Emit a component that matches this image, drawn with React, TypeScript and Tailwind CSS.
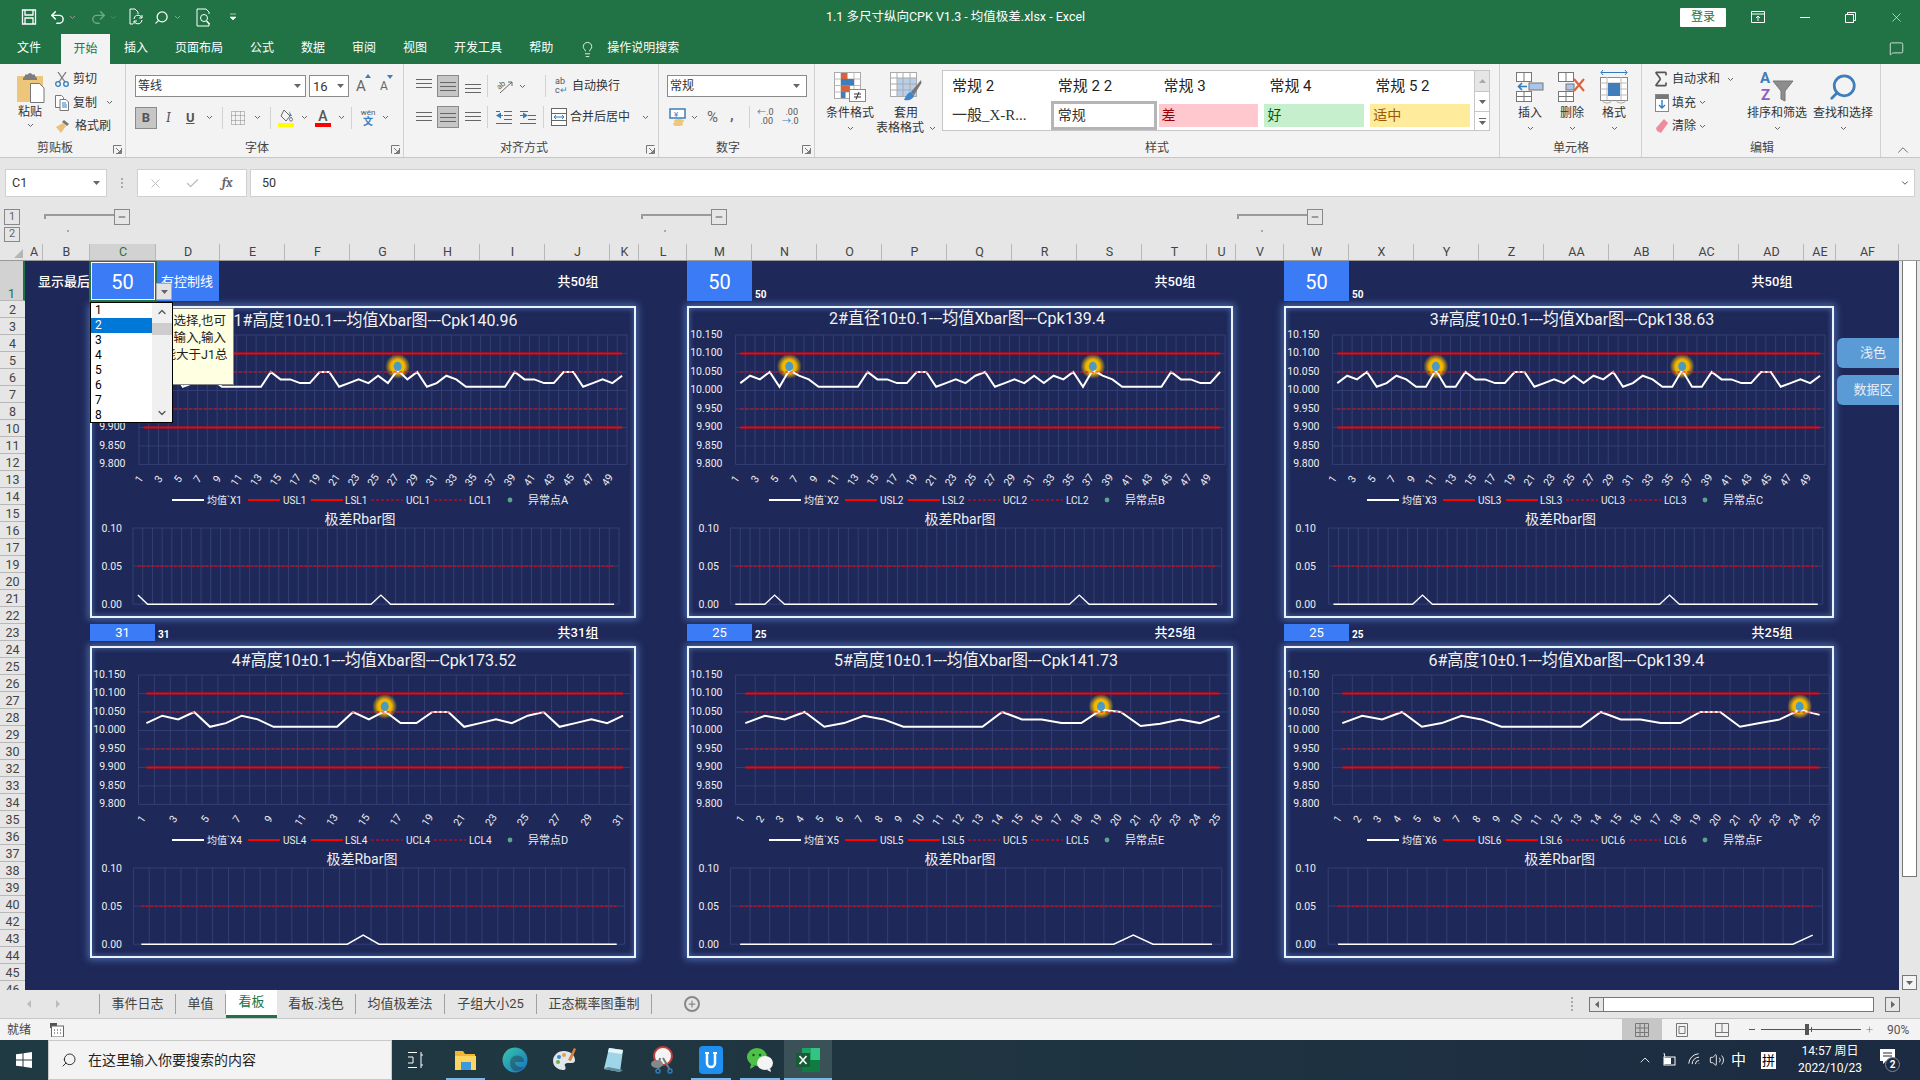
import React from 'react';
import { Undo2, Redo2, Search, Lightbulb, ChevronDown, ChevronUp, Plus, Minus, X, Check, MessageSquare, Sigma, Volume2, Wifi } from 'lucide-react';

// ---- chart data ----
const base = [10.02, 10.04, 10.03, 10.05, 10.01, 10.02, 10.04, 10.03, 10.01, 10.01, 10.01, 10.01, 10.01, 10.05, 10.03, 10.03, 10.02, 10.02, 10.05, 10.05, 10.01, 10.02, 10.03, 10.02, 10.04];
const d1 = [...base, 10.02, 10.055, 10.03, 10.05, 10.01, 10.02, 10.04, 10.03, 10.01, 10.01, 10.01, 10.01, 10.01, 10.05, 10.03, 10.03, 10.02, 10.02, 10.05, 10.05, 10.01, 10.02, 10.03, 10.02, 10.04];
const d2 = [10.02, 10.04, 10.03, 10.05, 10.01, 10.055, 10.04, 10.03, 10.01, 10.01, 10.01, 10.01, 10.01, 10.05, 10.03, 10.03, 10.02, 10.02, 10.05, 10.05, 10.01, 10.02, 10.03, 10.02, 10.04, 10.05, 10.01, 10.02, 10.03, 10.02, 10.04, 10.02, 10.04, 10.03, 10.05, 10.01, 10.055, 10.04, 10.03, 10.01, 10.01, 10.01, 10.01, 10.01, 10.05, 10.03, 10.03, 10.02, 10.02, 10.05];
const b3 = [10.02, 10.04, 10.03, 10.05, 10.01, 10.02, 10.04, 10.03, 10.01, 10.01, 10.055, 10.01, 10.01, 10.05, 10.03, 10.03, 10.02, 10.02, 10.05, 10.05, 10.01, 10.02, 10.03, 10.02, 10.04];
const d3 = [...b3, ...b3];
const d4 = [10.02, 10.04, 10.03, 10.05, 10.01, 10.02, 10.04, 10.03, 10.01, 10.01, 10.01, 10.01, 10.01, 10.05, 10.03, 10.052, 10.02, 10.02, 10.05, 10.05, 10.01, 10.02, 10.03, 10.02, 10.04, 10.05, 10.01, 10.02, 10.03, 10.02, 10.04];
const d5 = [10.02, 10.04, 10.03, 10.05, 10.01, 10.02, 10.04, 10.03, 10.01, 10.01, 10.01, 10.01, 10.01, 10.05, 10.03, 10.03, 10.02, 10.02, 10.056, 10.05, 10.012, 10.018, 10.03, 10.02, 10.04];
const d6 = [10.02, 10.04, 10.03, 10.05, 10.01, 10.02, 10.04, 10.03, 10.01, 10.01, 10.01, 10.01, 10.01, 10.05, 10.03, 10.03, 10.02, 10.02, 10.05, 10.05, 10.01, 10.02, 10.03, 10.056, 10.042];

interface ChartCfg {
  title: string; titleLen: number; titleX: number; titleY: number;
  w: number; plot: [number, number]; rplot: [number, number]; rTitleX: number; lx: number;
  data: number[]; marks: number[]; peaks: number[];
  no: number; pt: string;
  count: string; sub: string; total: string;
}

const charts: ChartCfg[] = [
  { title: '1#高度10±0.1---均值Xbar图---Cpk140.96', titleLen: 284, titleX: 285.6, titleY: 19, w: 546, plot: [49, 537], rplot: [43, 529], rTitleX: 270, lx: 0, data: d1, marks: [26], peaks: [0, 25], no: 1, pt: 'A', count: '50', sub: '', total: '共50组' },
  { title: '2#直径10±0.1---均值Xbar图---Cpk139.4', titleLen: 276, titleX: 280, titleY: 17, w: 546, plot: [48.4, 538], rplot: [43.4, 534.8], rTitleX: 273, lx: 0, data: d2, marks: [5, 36], peaks: [4, 35], no: 2, pt: 'B', count: '50', sub: '50', total: '共50组' },
  { title: '3#高度10±0.1---均值Xbar图---Cpk138.63', titleLen: 284.5, titleX: 288, titleY: 18, w: 550, plot: [48.4, 541], rplot: [44.6, 538.7], rTitleX: 276.5, lx: 1, data: d3, marks: [10, 35], peaks: [9, 34], no: 3, pt: 'C', count: '50', sub: '50', total: '共50组' },
  { title: '4#高度10±0.1---均值Xbar图---Cpk173.52', titleLen: 284.5, titleX: 284, titleY: 19, w: 546, plot: [48.5, 541], rplot: [43.4, 534.6], rTitleX: 272, lx: 0, data: d4, marks: [15], peaks: [14], no: 4, pt: 'D', count: '31', sub: '31', total: '共31组' },
  { title: '5#高度10±0.1---均值Xbar图---Cpk141.73', titleLen: 284, titleX: 289, titleY: 19, w: 546, plot: [48.4, 542.5], rplot: [43.4, 534.8], rTitleX: 273, lx: 0, data: d5, marks: [18], peaks: [20], no: 5, pt: 'E', count: '25', sub: '25', total: '共25组' },
  { title: '6#高度10±0.1---均值Xbar图---Cpk139.4', titleLen: 276, titleX: 282.4, titleY: 19, w: 550, plot: [48.4, 545.5], rplot: [44.2, 538.6], rTitleX: 275.7, lx: 1, data: d6, marks: [23], peaks: [24], no: 6, pt: 'F', count: '25', sub: '25', total: '共25组' },
];

const GRID = '#343f74';
const yLabels = ['10.150', '10.100', '10.050', '10.000', '9.950', '9.900', '9.850', '9.800'];

const Chart: React.FC<{ c: ChartCfg }> = ({ c }) => {
  const n = c.data.length;
  const top = 28, bottom = 157.4;
  const yOf = (v: number) => top + ((10.15 - v) / 0.35) * (bottom - top);
  const cw = (c.plot[1] - c.plot[0]) / n;
  const xOf = (i: number) => c.plot[0] + (i + 0.5) * cw;
  const rTop = 221, rBot = 297.2;
  const rw = (c.rplot[1] - c.rplot[0]) / n;
  const rxOf = (i: number) => c.rplot[0] + (i + 0.5) * rw;
  const rv = Array.from({ length: n }, (_, i) => (c.peaks.includes(i) ? 0.012 : 0));
  const ryOf = (v: number) => rBot - (v / 0.1) * (rBot - rTop);
  const pts = c.data.map((v, i) => `${xOf(i).toFixed(1)},${yOf(v).toFixed(1)}`).join(' ');
  const rpts = rv.map((v, i) => `${rxOf(i).toFixed(1)},${ryOf(v).toFixed(1)}`).join(' ');
  const step = n > 25 ? 2 : 1;
  const l = c.lx;
  const leg = 193;
  const lines: [number, string, string, boolean][] = [
    [82, `均值\`X${c.no}`, '#ffffff', false],
    [158, `USL${c.no}`, '#ff0000', false],
    [221, `LSL${c.no}`, '#ff0000', false],
    [281, `UCL${c.no}`, '#ff0000', true],
    [344, `LCL${c.no}`, '#ff0000', true],
  ];
  return (
    <div className="h-[312px] border-2 border-[#eaf1ff] shadow-[0_0_7px_2px_rgba(106,153,224,0.55),inset_0_0_5px_1px_rgba(106,153,224,0.45)]" style={{ width: c.w }}>
      <svg width={c.w - 4} height={308} className="block overflow-visible">
        <defs>
          <radialGradient id={`glow${c.no}`}>
            <stop offset="0%" stopColor="#ffc800" />
            <stop offset="55%" stopColor="#f0b400" />
            <stop offset="100%" stopColor="#f0b400" stopOpacity="0" />
          </radialGradient>
        </defs>
        <g transform="translate(-2,-1)">
          <text x={c.titleX} y={c.titleY} textAnchor="middle" textLength={c.titleLen} lengthAdjust="spacingAndGlyphs" className="fill-[#f2f2f2] text-[17px]">{c.title}</text>
          {yLabels.map((t, i) => {
            const y = top + (i * (bottom - top)) / 7;
            return (
              <g key={t}>
                <line x1={c.plot[0]} x2={c.plot[1]} y1={y} y2={y} stroke={GRID} />
                <text x={35.5} y={y + 3} textAnchor="end" className="fill-[#eeeeee] text-[10.5px]">{t}</text>
              </g>
            );
          })}
          {Array.from({ length: n + 1 }, (_, i) => (
            <line key={i} x1={c.plot[0] + i * cw} x2={c.plot[0] + i * cw} y1={top} y2={bottom} stroke={GRID} />
          ))}
          {Array.from({ length: n }, (_, i) => i)
            .filter((i) => i % step === 0)
            .map((i) => (
              <text key={i} transform={`translate(${xOf(i) - 2},${i + 1 < 10 ? 174 : 175}) rotate(-55)`} textAnchor="middle" className="fill-[#eeeeee] text-[10.5px]">{i + 1}</text>
            ))}
          {c.marks.map((i) => (
            <circle key={i} cx={xOf(i)} cy={yOf(10.065)} r={12.5} fill={`url(#glow${c.no})`} />
          ))}
          <polyline points={pts} fill="none" stroke="#ffffff" strokeWidth={2} />
          {c.marks.map((i) => (
            <ellipse key={i} cx={xOf(i)} cy={yOf(10.065)} rx={4} ry={4.6} fill="#4d9ac0" />
          ))}
          <line x1={xOf(0)} x2={xOf(n - 1)} y1={yOf(10.1)} y2={yOf(10.1)} stroke="#ff0000" strokeWidth={2} />
          <line x1={xOf(0)} x2={xOf(n - 1)} y1={yOf(9.9)} y2={yOf(9.9)} stroke="#ff0000" strokeWidth={2} />
          <line x1={xOf(0)} x2={xOf(n - 1)} y1={yOf(10.05)} y2={yOf(10.05)} stroke="#ff0000" strokeDasharray="3 2" />
          <line x1={xOf(0)} x2={xOf(n - 1)} y1={yOf(9.95)} y2={yOf(9.95)} stroke="#e01010" strokeDasharray="3 2" />

          {lines.map(([x, t, col, dash], i) => (
            <g key={t}>
              <line x1={x + l} x2={x + l + 32} y1={leg} y2={leg} stroke={col} strokeWidth={dash ? 1 : 2} strokeDasharray={dash ? '3 2' : undefined} />
              <text x={x + l + (i === 2 ? 34 : 35)} y={leg + 3.5} className="fill-[#eeeeee] text-[10px]">{t}</text>
            </g>
          ))}
          <circle cx={420 + l} cy={leg} r={2.4} fill="#5aa58c" />
          <text x={438 + l} y={leg + 3.5} className="fill-[#eeeeee] text-[11px]">{`异常点${c.pt}`}</text>

          <text x={c.rTitleX} y={217} textAnchor="middle" className="fill-[#eeeeee] text-[14px]">极差Rbar图</text>
          {['0.10', '0.05', '0.00'].map((t, i) => {
            const y = rTop + (i * (rBot - rTop)) / 2;
            return (
              <g key={t}>
                <line x1={c.rplot[0]} x2={c.rplot[1]} y1={y} y2={y} stroke={GRID} />
                <text x={32} y={y + 3.5} textAnchor="end" className="fill-[#eeeeee] text-[10.5px]">{t}</text>
              </g>
            );
          })}
          {Array.from({ length: n + 1 }, (_, i) => (
            <line key={i} x1={c.rplot[0] + i * rw} x2={c.rplot[0] + i * rw} y1={rTop} y2={rBot} stroke={GRID} />
          ))}
          <line x1={rxOf(0)} x2={rxOf(n - 1)} y1={ryOf(0.05)} y2={ryOf(0.05)} stroke="#ff0000" strokeDasharray="3 1.5" />
          <polyline points={rpts} fill="none" stroke="#ffffff" strokeWidth={1.4} />
        </g>
      </svg>
    </div>
  );
};

// ---- small ribbon helpers ----
const Chev: React.FC<{ className?: string }> = ({ className = '' }) => (
  <svg width="7" height="5" viewBox="0 0 7 5" className={`shrink-0 ${className}`}><path d="M1 1l2.5 2.5L6 1" fill="none" stroke="#666" strokeWidth="1" /></svg>
);
const Tri: React.FC<{ className?: string }> = ({ className = '' }) => (
  <svg width="7" height="4" viewBox="0 0 7 4" className={`shrink-0 ${className}`}><path d="M0 0h7L3.5 4z" fill="#666" /></svg>
);
const Launcher = () => (
  <svg width="9" height="9" viewBox="0 0 9 9" className="shrink-0"><path d="M.5 8.5v-8h8M8.5 3v5.5H3M3 3l4.5 4.5M7.5 5v2.5H5" fill="none" stroke="#777" strokeWidth="1" /></svg>
);
const Sep = () => <div className="w-px h-[22px] bg-[#d2d2d2] shrink-0" />;

const Lines: React.FC<{ y: number[] }> = ({ y }) => (
  <svg width="16" height="16" viewBox="0 0 16 16">{y.map((v) => <line key={v} x1="0" x2="16" y1={v + 0.5} y2={v + 0.5} stroke="#666" />)}</svg>
);

const BigBtn: React.FC<{ icon: React.ReactNode; l1: string; l2?: string; w: number; chevInline?: boolean }> = ({ icon, l1, l2, w, chevInline }) => (
  <div className="flex flex-col items-center shrink-0" style={{ width: w }}>
    <div className="h-[30px] flex items-center justify-center mt-[8px]">{icon}</div>
    <div className="mt-[3px] text-[12px] leading-[16px] text-[#333]">{l1}</div>
    {l2 ? (
      <div className="text-[12px] leading-[15px] text-[#333] whitespace-nowrap flex items-center gap-[5px]">{l2}{chevInline && <Chev />}</div>
    ) : (
      <Chev className="mt-[5px]" />
    )}
  </div>
);

const Group: React.FC<{ w: number; label: string; launcher?: boolean; labelCx: number; children: React.ReactNode }> = ({ w, label, launcher, labelCx, children }) => (
  <div className="relative shrink-0 h-full border-r border-[#d0d0d0]" style={{ width: w }}>
    {children}
    <div className="absolute top-[76px] h-[16px] leading-[16px] text-[12px] text-[#444] -translate-x-1/2 whitespace-nowrap" style={{ left: labelCx }}>{label}</div>
    {launcher && <div className="absolute right-[3px] top-[81px]"><Launcher /></div>}
  </div>
);

const CondIco = () => (
  <svg width="32" height="30" viewBox="0 0 32 30">
    <rect x=".5" y=".5" width="26" height="26" fill="#fff" stroke="#aaa" />
    <path d="M.5 7h26M.5 13.5h26M.5 20h26M7 .5v26M20 .5v26" stroke="#bbb" fill="none" />
    <rect x="7" y="1" width="6.5" height="6" fill="#d9623a" /><rect x="7" y="7" width="13" height="6.5" fill="#3f7dbb" /><rect x="7" y="13.5" width="9" height="6.5" fill="#d9623a" /><rect x="7" y="20" width="4.5" height="6" fill="#3f7dbb" />
    <rect x="15.5" y="17.5" width="16" height="12" fill="#fff" stroke="#888" />
    <path d="M20 22h7M20 25h7M25 20l-3 7.5" stroke="#333" fill="none" />
  </svg>
);
const TableIco = () => (
  <svg width="32" height="30" viewBox="0 0 32 30">
    <rect x=".5" y=".5" width="26" height="24" fill="#fff" stroke="#aaa" />
    <rect x="7" y="6" width="19" height="18" fill="#b7cfe8" />
    <path d="M.5 6h26M.5 12h26M.5 18h26M7 .5v24M13 .5v24M20 .5v24" stroke="#aaa" fill="none" />
    <path d="M31 8L21 20l3 3L31.5 11z" fill="#777" /><path d="M21 20c-4 1-5 4-7 8 5 1 10-1 10-5z" fill="#3f86cf" />
  </svg>
);
const InsertIco: React.FC<{ x?: boolean }> = ({ x }) => (
  <svg width="28" height="30" viewBox="0 0 28 30">
    <rect x=".5" y=".5" width="15" height="9" fill="#fff" stroke="#777" /><line x1="8" x2="8" y1="0" y2="10" stroke="#777" />
    <rect x=".5" y="19.5" width="15" height="10" fill="#fff" stroke="#777" /><path d="M8 19v11M0 24.5h16" stroke="#777" />
    {x ? (
      <><rect x="8" y="12" width="8" height="6" fill="#a9c6e8" stroke="#777" /><path d="M16 7l10 12M26 7L16 19" stroke="#d9623a" strokeWidth="2" fill="none" /></>
    ) : (
      <><rect x="13" y="11" width="14" height="7" fill="#a9c6e8" stroke="#777" /><path d="M11 14.5H3M6 11l-3.5 3.5L6 18" stroke="#2f7dbf" strokeWidth="1.6" fill="none" /></>
    )}
  </svg>
);
const FormatIco = () => (
  <svg width="28" height="36" viewBox="0 0 28 36">
    <path d="M1 3.5h26M3 1l-2 2.5L3 6M25 1l2 2.5L25 6" stroke="#2f7dbf" fill="none" />
    <rect x=".5" y="8.5" width="27" height="23" fill="#fff" stroke="#888" />
    <path d="M7 8v23M21 8v23M.5 14h27M.5 20h27M.5 26h27" stroke="#bbb" />
    <rect x="8" y="14" width="12" height="13" fill="#3f7dbb" />
    <path d="M2 31c1 4 9 4 10 0M16 31c1 4 9 4 10 0" stroke="#aaa" fill="none" />
  </svg>
);
const SortIco = () => (
  <svg width="36" height="36" viewBox="0 0 36 36">
    <text x="1" y="14" className="text-[15px] font-bold fill-[#3f7dbb]">A</text>
    <text x="2" y="31" className="text-[15px] font-bold fill-[#8e5fc0]">Z</text>
    <path d="M14 12h20l-8 10v10l-4-2v-8z" fill="#8d8d8d" stroke="#777" />
  </svg>
);
const PasteIco = () => (
  <svg width="29" height="30" viewBox="0 0 29 30">
    <path d="M1 3h26v26H1z" fill="#eec67a" />
    <path d="M9 3V1.5h10V3l2 2v2H7V5z" fill="#7d7d7d" />
    <circle cx="14" cy="2" r="2" fill="#7d7d7d" />
    <path d="M14.5 10.5h9l4.5 4.5v14.500h-13.500z" fill="#fff" stroke="#777" />
  </svg>
);

const tabsTop = ['插入', '页面布局', '公式', '数据', '审阅', '视图', '开发工具', '帮助'];
const columns: [string, number][] = [
  ['A', 18], ['B', 47], ['C', 66], ['D', 64], ['E', 65], ['F', 65], ['G', 65], ['H', 65], ['I', 65], ['J', 65], ['K', 29],
  ['L', 48], ['M', 65], ['N', 65], ['O', 65], ['P', 65], ['Q', 65], ['R', 65], ['S', 65], ['T', 65], ['U', 29],
  ['V', 48], ['W', 65], ['X', 65], ['Y', 65], ['Z', 65], ['AA', 65], ['AB', 65], ['AC', 65], ['AD', 65], ['AE', 32], ['AF', 63],
];
const rows = [2, 3, 4, 5, 6, 7, 8, 10, 11, 12, 13, 14, 15, 16, 17, 19, 20, 21, 22, 23, 24, 25, 26, 27, 28, 29, 30, 32, 33, 34, 35, 36, 37, 38, 39, 40, 42, 43, 44, 45, 46];
const sheetTabs = [
  { t: '事件日志', w: 76 }, { t: '单值', w: 50 }, { t: '看板', w: 51, active: true }, { t: '看板.浅色', w: 79 },
  { t: '均值极差法', w: 89 }, { t: '子组大小25', w: 92 }, { t: '正态概率图重制', w: 115 },
];

const Panel: React.FC<{ c: ChartCfg; big?: boolean; first?: boolean }> = ({ c, big, first }) => (
  <div className="shrink-0" style={{ width: c.w }}>
    <div className={`flex w-[508px] justify-between ${big ? 'h-[40px]' : 'h-[17px]'}`}>
      <div className="flex">
        <div className={`w-[65px] bg-[#3b7cf6] text-white flex items-center justify-center ${big ? 'text-[20px] pt-[2px]' : 'text-[13px]'}`}>{c.count}</div>
        {first ? (
          <div className="w-[64px] bg-[#3b7cf6] text-white text-[13px] flex items-center justify-center whitespace-nowrap pt-[1px]">有控制线</div>
        ) : (
          <div className="ml-[3px] self-end translate-y-[1px] text-white text-[10px] leading-[14px] font-bold">{c.sub}</div>
        )}
      </div>
      <div className={`text-white w-[40px] text-[13px] font-medium text-center whitespace-nowrap flex items-center justify-center ${big ? 'pt-[2px]' : 'pt-[1px]'}`}>{c.total}</div>
    </div>
    <div className="mt-[5px]"><Chart c={c} /></div>
  </div>
);

export default function App() {
  return (
    <div className="w-[1920px] h-[1080px] overflow-hidden flex flex-col bg-[#e6e6e6] text-[#333] [font-family:Roboto,'Noto_Sans_CJK_SC',sans-serif]">
      {/* title bar */}
      <div className="h-[34px] bg-[#217346] flex items-center text-white relative">
        <div className="flex items-center pl-[21px]">
          <svg width="16" height="16" viewBox="0 0 16 16" className="mr-[12px]"><path d="M1.5 1h13v14h-13zM4 1v5h8V1M4 15V9h8v6" fill="none" stroke="#fff" strokeWidth="1.3" /></svg>
          <Undo2 size={17} strokeWidth={2} className="mr-[3px]" />
          <Chev className="mr-[14px] invert" />
          <Redo2 size={17} strokeWidth={2} className="text-[#6fa78a] mr-[3px]" />
          <Chev className="mr-[12px] opacity-40 invert" />
          <svg width="16" height="18" viewBox="0 0 16 18" className="mr-[9px]"><path d="M6 1H1v15h3M6 1l3 3v2" fill="none" stroke="#fff" /><path d="M5 11a4 4 0 0 1 7-2.5l1 1.5M13 12a4 4 0 0 1-7 2.5L5 13M13 7v3h-3M5 16v-3h3" fill="none" stroke="#fff" /></svg>
          <Search size={15} strokeWidth={2} className="mr-[3px] -scale-x-100" />
          <Chev className="mr-[15px] ml-[2px] invert" />
          <svg width="17" height="19" viewBox="0 0 17 19" className="mr-[16px]"><path d="M10 1H1v17h12v-3M10 1l3 3v2" fill="none" stroke="#fff" /><circle cx="8" cy="10" r="3.5" fill="none" stroke="#fff" /><path d="M10.5 13l3 3" stroke="#fff" strokeWidth="1.5" /></svg>
          <svg width="8" height="8" viewBox="0 0 8 8"><path d="M1 1h6M1 4h6l-3 3z" fill="#fff" stroke="#fff" strokeWidth=".6" /></svg>
        </div>
        <div className="flex-1" />
        <div className="absolute left-[826px] top-[8px] text-[12.5px] leading-[17px] whitespace-nowrap">1.1 多尺寸纵向CPK V1.3 - 均值极差.xlsx - Excel</div>
        <div className="w-[46px] h-[19px] bg-white text-[#217346] text-[12px] flex items-center justify-center rounded-[1px] mr-[25px]">登录</div>
        <svg width="14" height="12" viewBox="0 0 14 12" className="mr-[35px]"><path d="M.5.5h13v11H.5zM.5 3h13M7 10V5M5 7l2-2 2 2" fill="none" stroke="#fff" /></svg>
        <div className="w-[10px] h-px bg-white mr-[35px]" />
        <svg width="11" height="11" viewBox="0 0 11 11" className="mr-[33px]"><path d="M.5 2.5h8v8h-8zM2.500 2.500v-2h8v8h-2" fill="none" stroke="#fff" /></svg>
        <X size={15} strokeWidth={1} className="mr-[16px]" />
      </div>
      {/* ribbon tabs */}
      <div className="h-[30px] bg-[#217346] flex text-white text-[12px] relative">
        <div className="ml-[17px] leading-[30px] -mt-[1px]">文件</div>
        <div className="ml-[20px] w-[49px] bg-[#f3f3f3] text-[#217346] text-center leading-[30px]">开始</div>
        <div className="flex gap-[27px] ml-[14px] leading-[29px]">
          {tabsTop.map((t) => <div key={t}>{t}</div>)}
        </div>
        <Lightbulb size={17} strokeWidth={1.2} className="ml-[26px] mt-[7px]" />
        <div className="ml-[11px] leading-[29px]">操作说明搜索</div>
        <MessageSquare size={15} strokeWidth={1.2} className="absolute left-[1889px] top-[7px]" />
      </div>
      {/* ribbon */}
      <div className="h-[94px] bg-[#f3f3f3] border-b border-[#c6c6c6] flex shrink-0">
        <Group w={126} label="剪贴板" launcher labelCx={55}>
          <div className="flex">
            <div className="flex flex-col items-center w-[28px] ml-[16px] mt-[9px] shrink-0">
              <PasteIco />
              <div className="text-[12px] leading-[16px] mt-[1px]">粘贴</div>
              <Chev className="mt-[3px]" />
            </div>
            <div className="ml-[11px] mt-[6px] text-[12px] flex flex-col gap-[5.5px]">
              <div className="flex items-center h-[18px] gap-[4px]">
                <svg width="14" height="16" viewBox="0 0 14 16"><path d="M3 1l7 10M11 1L4 11" stroke="#777" strokeWidth="1.3" /><circle cx="3" cy="13" r="2.3" fill="none" stroke="#2f7dbf" strokeWidth="1.3" /><circle cx="11" cy="13" r="2.3" fill="none" stroke="#2f7dbf" strokeWidth="1.3" /></svg>
                <span>剪切</span>
              </div>
              <div className="flex items-center h-[18px] gap-[4px]">
                <svg width="14" height="16" viewBox="0 0 14 16"><path d="M.5.5h6l2 2v10h-8z" fill="#fff" stroke="#777" /><path d="M5 4.5h6l2.500 2.500v8.500H5z" fill="#fff" stroke="#777" /><path d="M7 8h4M7 10h5M7 12h5" stroke="#2f7dbf" /></svg>
                <span>复制</span><Chev className="ml-[5px]" />
              </div>
              <div className="flex items-center h-[18px] gap-[4px]">
                <svg width="16" height="16" viewBox="0 0 16 16"><path d="M9 2l5 4-2 2-5-4z" fill="#777" /><path d="M8 5l-7 4 5 6 5-7z" fill="#e9c07c" /></svg>
                <span>格式刷</span>
              </div>
            </div>
          </div>
        </Group>
        <Group w={278} label="字体" launcher labelCx={131}>
          <div className="pl-[9px] pt-[11px]">
            <div className="flex items-center">
              <div className="w-[171px] h-[22px] bg-white border border-[#8a8a8a] flex items-center justify-between pl-[2px] pr-[4px] text-[12px] leading-none">等线<Tri /></div>
              <div className="w-[40px] h-[22px] bg-white border border-[#8a8a8a] ml-[3px] flex items-center justify-between pl-[3px] pr-[4px] text-[13px]">16<Tri /></div>
              <div className="ml-[7px] flex w-[14px] text-[15px] text-[#666] relative">A<span className="absolute left-[9px] -top-[1px] w-0 h-0 border-x-[3px] border-x-transparent border-b-[4px] border-b-[#3f7dbb]" /></div>
              <div className="ml-[10px] flex w-[14px] text-[12px] text-[#666] relative">A<span className="absolute left-[7px] -top-[2px] w-0 h-0 border-x-[3px] border-x-transparent border-t-[4px] border-t-[#3f7dbb]" /></div>
            </div>
            <div className="flex items-center mt-[9px] h-[22px]">
              <div className="w-[22px] h-[22px] bg-[#c6c6c6] border border-[#8a8a8a] flex items-center justify-center text-[13px] font-bold text-[#555]">B</div>
              <span className="ml-[9px] w-[6px] italic font-serif text-[14px] text-[#555]">I</span>
              <span className="ml-[14px] w-[11px] underline text-[13px] font-bold text-[#555]">U</span>
              <Chev className="ml-[9px]" />
              <div className="ml-[9px]"><Sep /></div>
              <svg width="14" height="14" viewBox="0 0 14 14" className="ml-[8px]"><path d="M.5.5h13v13H.5zM4.500.5v13M9.500.5v13M.5 4.500h13M.5 9.500h13" fill="none" stroke="#888" strokeDasharray="1 1" /></svg>
              <Chev className="ml-[9px]" />
              <div className="ml-[9px]"><Sep /></div>
              <div className="ml-[7px] flex flex-col items-center w-[16px]">
                <svg width="16" height="14" viewBox="0 0 16 14"><path d="M6 1l6 6-4 5-5-5zM13 8c2 2 2 4 0 4s-2-2 0-4" fill="none" stroke="#666" /><path d="M11 2l3 5-2 0z" fill="#3f7dbb" /></svg>
                <div className="w-[16px] h-[4px] bg-[#ffff00]" />
              </div>
              <Chev className="ml-[7px]" />
              <div className="ml-[7px] flex flex-col items-center w-[16px] text-[14px] leading-[14px] font-medium text-[#555]">A<div className="w-[16px] h-[4px] bg-[#ff0000]" /></div>
              <Chev className="ml-[7px]" />
              <div className="ml-[6px]"><Sep /></div>
              <div className="ml-[8px] flex flex-col items-center leading-none w-[16px]">
                <span className="text-[8px] text-[#555]">wén</span>
                <span className="text-[10px] text-[#3f7dbb] font-bold">文</span>
              </div>
              <Chev className="ml-[6px]" />
            </div>
          </div>
        </Group>
        <Group w={255} label="对齐方式" launcher labelCx={120}>
          <div className="pl-[12px] pt-[11px]">
            <div className="flex items-center h-[22px]">
              <div className="w-[16px] -mt-[4px]"><Lines y={[3, 7, 11]} /></div>
              <div className="ml-[5px] w-[22px] h-[22px] bg-[#c6c6c6] border border-[#8a8a8a] flex items-center justify-center"><Lines y={[4, 8, 12]} /></div>
              <div className="ml-[6px] w-[16px] mt-[4px]"><Lines y={[4, 8, 12]} /></div>
              <div className="ml-[6px]"><Sep /></div>
              <svg width="18" height="18" viewBox="0 0 18 18" className="ml-[8px] overflow-visible"><text x="1" y="11" transform="rotate(-40 5 9)" className="text-[8px] fill-[#666]">ab</text><path d="M4 16L16 5M12 5h4v4" fill="none" stroke="#666" /></svg>
              <Chev className="ml-[5px]" />
              <div className="ml-[19px]"><Sep /></div>
              <div className="ml-[9px] w-[14px] text-[9px] leading-[9px] text-[#555]">ab<br />c<span className="text-[#3f7dbb]">↵</span></div>
              <span className="ml-[3px] text-[12px]">自动换行</span>
            </div>
            <div className="flex items-center h-[22px] mt-[9px]">
              <div className="w-[16px]"><Lines y={[3, 7, 11]} /></div>
              <div className="ml-[5px] w-[22px] h-[22px] bg-[#c6c6c6] border border-[#8a8a8a] flex items-center justify-center"><Lines y={[4, 8, 12]} /></div>
              <div className="ml-[6px] w-[16px]"><Lines y={[3, 7, 11]} /></div>
              <div className="ml-[6px]"><Sep /></div>
              <svg width="16" height="14" viewBox="0 0 16 14" className="ml-[8px]"><path d="M8 1.500h8M8 5.500h8M8 9.500h8M0 13.500h16M0 1.500h4" stroke="#666" /><path d="M0 5.500l5-3v6z" fill="#2f7dbf" /><path d="M3 5.500h4" stroke="#2f7dbf" /></svg>
              <svg width="16" height="14" viewBox="0 0 16 14" className="ml-[8px]"><path d="M0 1.500h8M8 5.500h8M8 9.500h8M0 13.500h16" stroke="#666" /><path d="M8 5.500l-5-3v6z" fill="#2f7dbf" /><path d="M0 5.500h4" stroke="#2f7dbf" /></svg>
              <div className="ml-[7px]"><Sep /></div>
              <svg width="16" height="18" viewBox="0 0 16 18" className="ml-[7px]"><rect x=".5" y=".5" width="15" height="17" fill="#fff" stroke="#666" /><path d="M.5 5.500h15M.5 12.500h15" stroke="#666" /><path d="M3 9h10M5 7L3 9l2 2M11 7l2 2-2 2" stroke="#2f7dbf" fill="none" /></svg>
              <span className="ml-[3px] text-[12px] whitespace-nowrap">合并后居中</span>
              <Chev className="ml-[12px]" />
            </div>
          </div>
        </Group>
        <Group w={156} label="数字" launcher labelCx={69}>
          <div className="pl-[8px] pt-[11px]">
            <div className="w-[140px] h-[22px] bg-white border border-[#8a8a8a] flex items-center justify-between pl-[2px] pr-[6px] text-[12px] leading-none">常规<Tri /></div>
            <div className="flex items-center h-[22px] mt-[9px]">
              <svg width="17" height="18" viewBox="0 0 17 18" className="ml-[2px]"><rect x="1" y="1" width="15" height="9" fill="#fff" stroke="#3f7dbb" strokeWidth="1.5" /><text x="5" y="9" className="text-[8px] fill-[#3f7dbb]">¥</text><ellipse cx="10" cy="13" rx="5" ry="2" fill="#eec67a" /><ellipse cx="9" cy="16" rx="5" ry="2" fill="#eec67a" /></svg>
              <Chev className="ml-[5px]" />
              <span className="ml-[9px] w-[14px] text-[15px] text-[#666]">%</span>
              <span className="ml-[9px] w-[5px] text-[15px] font-bold text-[#666] -mt-[3px]">,</span>
              <div className="ml-[14px]"><Sep /></div>
              <div className="ml-[7px] w-[16px] text-[9px] leading-[9px] text-[#555] text-right"><span className="text-[#3f7dbb]">←</span>.0<br />.00</div>
              <div className="ml-[9px] w-[16px] text-[9px] leading-[9px] text-[#555] text-right">.00<br /><span className="text-[#3f7dbb]">→</span>.0</div>
            </div>
          </div>
        </Group>
        <Group w={685} label="样式" labelCx={342}>
          <div className="flex">
            <div className="ml-[10px]"><BigBtn icon={<CondIco />} l1="条件格式" w={50} /></div>
            <div className="ml-[3px]"><BigBtn icon={<TableIco />} l1="套用" l2="表格格式" w={56} chevInline /></div>
            <div className="ml-[8px] mt-[6px] w-[548px] h-[61px] bg-white border border-[#c6c6c6] flex">
              <div className="flex-1 pl-[2px]">
                <div className="grid grid-cols-5 h-[30px] text-[15px] text-[#222] items-center">
                  {['常规 2', '常规 2 2', '常规 3', '常规 4', '常规 5 2'].map((t) => <div key={t} className="pl-[7px] whitespace-nowrap">{t}</div>)}
                </div>
                <div className="grid grid-cols-5 h-[29px] text-[14px]">
                  <div className="pl-[7px] text-[15px] leading-[29px] whitespace-nowrap [font-family:'Liberation_Serif','Noto_Sans_CJK_SC',serif]">一般_X-R...</div>
                  <div className="border-[3px] border-[#b5b5b5] bg-white pl-[4px] leading-[22px] w-[106px]">常规</div>
                  <div className="ml-[2px] mr-[4px] my-[3px] bg-[#ffc7ce] text-[#9c0006] pl-[3px] leading-[23px]">差</div>
                  <div className="ml-[2px] mr-[4px] my-[3px] bg-[#c6efce] text-[#006100] pl-[3px] leading-[23px]">好</div>
                  <div className="ml-[2px] mr-[4px] my-[3px] bg-[#ffeb9c] text-[#9c5700] pl-[3px] leading-[23px]">适中</div>
                </div>
              </div>
              <div className="w-[15px] border-l border-[#c6c6c6] flex flex-col text-[#888]">
                <div className="h-[21px] bg-[#e6e6e6] border-b border-[#c6c6c6] flex items-center justify-center"><svg width="7" height="4" viewBox="0 0 7 4"><path d="M0 4h7L3.5 0z" fill="#aaa" /></svg></div>
                <div className="h-[20px] border-b border-[#c6c6c6] flex items-center justify-center"><Tri /></div>
                <div className="flex-1 flex flex-col gap-[2px] items-center justify-center"><div className="w-[7px] h-px bg-[#666]" /><Tri /></div>
              </div>
            </div>
          </div>
        </Group>
        <Group w={142} label="单元格" labelCx={71}>
          <div className="flex pl-[9px]">
            <BigBtn icon={<InsertIco />} l1="插入" w={42} />
            <BigBtn icon={<InsertIco x />} l1="删除" w={42} />
            <BigBtn icon={<FormatIco />} l1="格式" w={42} />
          </div>
        </Group>
        <Group w={239} label="编辑" labelCx={120}>
          <div className="flex">
            <div className="ml-[11px] mt-[6px] text-[12px] flex flex-col gap-[5.5px] w-[94px] shrink-0">
              <div className="flex items-center h-[18px]"><Sigma size={20} strokeWidth={2} className="text-[#555] shrink-0 -ml-[2px]" /><span className="ml-[1px] whitespace-nowrap">自动求和</span><Chev className="ml-[7px]" /></div>
              <div className="flex items-center h-[18px]">
                <svg width="14" height="18" viewBox="0 0 14 18" className="ml-[2px]"><rect x=".5" y=".5" width="13" height="17" fill="#fff" stroke="#888" /><rect x="1" y="1" width="12" height="4" fill="#777" /><path d="M7 6v8M4 11l3 3 3-3" stroke="#2f7dbf" strokeWidth="1.4" fill="none" /></svg>
                <span className="ml-[3px]">填充</span><Chev className="ml-[3px]" />
              </div>
              <div className="flex items-center h-[18px]">
                <svg width="14" height="16" viewBox="0 0 14 16" className="ml-[2px]"><path d="M9 1l4 4-7 10-4-2-1-3z" fill="#ee8c9c" /></svg>
                <span className="ml-[3px]">清除</span><Chev className="ml-[3px]" />
              </div>
            </div>
            <div className="ml-[-3px]"><BigBtn icon={<SortIco />} l1="排序和筛选" w={66} /></div>
            <BigBtn icon={<Search size={30} strokeWidth={2.2} className="text-[#3f7dbb] -scale-x-100" />} l1="查找和选择" w={66} />
          </div>
        </Group>
        <div className="relative flex-1"><ChevronUp size={18} strokeWidth={1} className="absolute left-[13px] top-[77px] text-[#444]" /></div>
      </div>
      {/* formula bar */}
      <div className="h-[42px] shrink-0 bg-[#e6e6e6] flex items-start pt-[11px] pl-[5px] pr-[5px]">
        <div className="w-[102px] h-[28px] bg-white border border-[#d0d0d0] flex items-center justify-between pl-[6px] pr-[6px] text-[12.5px]">C1<Tri /></div>
        <div className="w-[30px] h-[28px] flex flex-col items-center justify-center gap-[2px]">
          <span className="w-[2px] h-[2px] bg-[#aaa]" /><span className="w-[2px] h-[2px] bg-[#aaa]" /><span className="w-[2px] h-[2px] bg-[#aaa]" />
        </div>
        <div className="w-[110px] h-[28px] bg-white border border-[#d0d0d0] flex items-center pl-[10px] gap-[22px] text-[#bbb]">
          <X size={15} strokeWidth={1.5} /><Check size={15} strokeWidth={2} />
          <span className="italic font-serif text-[#666] text-[13px] font-semibold">fx</span>
        </div>
        <div className="ml-[3px] flex-1 h-[28px] bg-white border border-[#d0d0d0] flex items-center justify-between pl-[11px] pr-[4px] text-[12.5px]">50<ChevronDown size={10} strokeWidth={2} /></div>
      </div>
      {/* outline */}
      <div className="h-[44px] shrink-0 flex bg-[#e6e6e6] relative">
        <div className="flex flex-col w-[44px] pl-[4px] pt-[9px] gap-[2px] text-[11px] text-[#666] shrink-0">
          <div className="w-[16px] h-[16px] border border-[#888] bg-[#e6e6e6] flex items-center justify-center">1</div>
          <div className="w-[16px] h-[15px] border border-[#888] bg-[#e6e6e6] flex items-center justify-center">2</div>
        </div>
        {[{ ml: 0, w: 71, d: 23 }, { ml: 511, w: 71, d: 23 }, { ml: 510, w: 71, d: 24 }].map((o, i) => (
          <div key={i} className="flex flex-col shrink-0" style={{ marginLeft: o.ml, width: o.w + 15 }}>
            <div className="flex items-start mt-[9px]">
              <div className="mt-[5px] h-[5px] border-l-2 border-t-2 border-[#9a9a9a]" style={{ width: o.w }} />
              <div className="w-[16px] h-[16px] border border-[#888] flex items-center justify-center shrink-0"><Minus size={10} strokeWidth={2.5} className="text-[#555]" /></div>
            </div>
            <div className="w-[2px] h-[2px] bg-[#aaa] mt-[5px]" style={{ marginLeft: o.d }} />
          </div>
        ))}
      </div>
      {/* column headers */}
      <div className="h-[17px] shrink-0 flex bg-[#e6e6e6] border-b border-[#9a9a9a] text-[12.5px] text-[#444] leading-[16px]">
        <div className="w-[25px] h-full flex items-end justify-end pr-[2px] pb-[2px]"><div className="w-0 h-0 border-l-[9px] border-l-transparent border-b-[9px] border-b-[#b5b5b5]" /></div>
        {columns.map(([c, w]) => (
          <div key={c} className={`text-center shrink-0 border-r border-[#b8b8b8] pl-[1px] ${c === 'C' ? 'bg-[#d2d2d2] text-[#217346]' : ''}`} style={{ width: w }}>{c}</div>
        ))}
      </div>
      {/* sheet */}
      <div className="h-[729px] shrink-0 flex overflow-hidden relative">
        <div className="w-[25px] shrink-0 bg-[#e6e6e6] text-[12.5px] text-[#444]">
          <div className="h-[40px] bg-[#d2d2d2] border-r-2 border-[#217346] border-b border-b-[#b8b8b8] text-[#217346] flex items-end justify-center leading-[12px]">1</div>
          {rows.map((r) => (
            <div key={r} className="h-[17px] border-b border-[#b8b8b8] text-center leading-[17px]">{r}</div>
          ))}
        </div>
        <div className="w-[1874px] shrink-0 bg-[#1e2859]">
          <div className="flex">
            <div className="w-[65px] shrink-0 h-[40px] flex items-center justify-end text-white text-[13px] font-medium whitespace-nowrap pt-[2px]">显示最后</div>
            <Panel c={charts[0]} big first />
            <div className="w-[51px] shrink-0" />
            <Panel c={charts[1]} big />
            <div className="w-[51px] shrink-0" />
            <Panel c={charts[2]} big />
          </div>
          <div className="flex mt-[6px]">
            <div className="w-[65px] shrink-0" />
            <Panel c={charts[3]} />
            <div className="w-[51px] shrink-0" />
            <Panel c={charts[4]} />
            <div className="w-[51px] shrink-0" />
            <Panel c={charts[5]} />
          </div>
        </div>
        {/* scrollbar */}
        <div className="flex-1 bg-[#e6e6e6] pl-[3px] flex flex-col -mt-[61px] pr-[3px] z-10">
          <div className="h-[15px] w-[15px] mt-[9px] bg-[#f3f3f3] border border-[#777] flex items-center justify-center shrink-0"><svg width="7" height="4" viewBox="0 0 7 4"><path d="M0 4h7L3.5 0z" fill="#666" /></svg></div>
          <div className="w-[15px] h-[653px] bg-white border border-[#777] shrink-0" />
          <div className="flex-1" />
          <div className="h-[15px] w-[15px] bg-[#f3f3f3] border border-[#777] flex items-center justify-center shrink-0"><Tri /></div>
        </div>

        {/* selected cell + drop list */}
        <div className="absolute left-[89px] top-[-1px] w-[68px] h-[42px] border-2 border-[#217346]"><div className="w-full h-full border border-white" /></div>
        <div className="absolute left-[156px] top-[22px] w-[16px] h-[17px] bg-[#e3e3e3] border border-[#aaa] flex items-center justify-center"><Tri /></div>
        <div className="absolute left-[150px] top-[47px] w-[84px] h-[77px] bg-[#ffffe1] border border-[#888] text-[12.5px] text-[#222] leading-[17px] pr-[7px] pt-[3px] text-right whitespace-nowrap overflow-hidden">
          <div>选择,也可</div><div>输入,输入</div><div>不能大于J1总</div>
        </div>
        <div className="absolute left-[90px] top-[41px] w-[83px] h-[121px] bg-white border border-black flex text-[12px] leading-[15px]">
          <div className="flex-1 pt-[0px]">
            {[1, 2, 3, 4, 5, 6, 7, 8].map((i) => (
              <div key={i} className={`h-[15px] pl-[4px] ${i === 2 ? 'bg-[#0078d7] text-white' : 'text-black'}`}>{i}</div>
            ))}
          </div>
          <div className="w-[20px] bg-[#f0f0f0] flex flex-col items-center justify-between py-[3px] relative">
            <ChevronUp size={12} strokeWidth={2.5} className="text-[#555]" />
            <div className="absolute left-0 top-[20px] w-full h-[12px] bg-[#cdcdcd]" />
            <ChevronDown size={12} strokeWidth={2.5} className="text-[#555]" />
          </div>
        </div>
        {/* shapes over the sheet */}
        <div className="absolute left-[1837px] top-[77px] w-[62px] flex flex-col gap-[7px] text-[13px] text-[#e8eef8]">
          <div className="h-[30px] bg-[#5b9bd5] rounded-l-[6px] flex items-center justify-center pl-[10px]">浅色</div>
          <div className="h-[30px] bg-[#5b9bd5] rounded-l-[6px] flex items-center justify-center pl-[10px]">数据区</div>
        </div>
      </div>
      {/* sheet tabs */}
      <div className="h-[28px] shrink-0 bg-[#e6e6e6] flex items-center text-[13px] text-[#444] relative">
        <div className="w-[100px] h-[20px] flex items-center pl-[27px] gap-[25px] shrink-0 border-r border-[#a0a0a0]">
          <svg width="4" height="8" viewBox="0 0 4 8"><path d="M4 0v8L0 4z" fill="#bbb" /></svg>
          <svg width="4" height="8" viewBox="0 0 4 8"><path d="M0 0v8l4-4z" fill="#bbb" /></svg>
        </div>
        {sheetTabs.map((s) => (
          <div key={s.t} className={`shrink-0 text-center whitespace-nowrap ${s.active ? 'h-full bg-white text-[#217346] border-b-[3px] border-[#217346] leading-[24px]' : 'h-[20px] leading-[20px] border-r border-[#a0a0a0]'}`} style={{ width: s.w }}>{s.t}</div>
        ))}
        <div className="ml-[32px] w-[16px] h-[16px] rounded-full border-2 border-[#888] flex items-center justify-center"><Plus size={10} strokeWidth={3} className="text-[#888]" /></div>
        <div className="flex-1" />
        <div className="flex flex-col gap-[2px] mr-[16px]"><span className="w-[2px] h-[2px] bg-[#aaa]" /><span className="w-[2px] h-[2px] bg-[#aaa]" /><span className="w-[2px] h-[2px] bg-[#aaa]" /><span className="w-[2px] h-[2px] bg-[#aaa]" /></div>
        <div className="w-[15px] h-[15px] border border-[#777] flex items-center justify-center"><svg width="4" height="7" viewBox="0 0 4 7"><path d="M4 0v7L0 3.5z" fill="#666" /></svg></div>
        <div className="w-[271px] h-[15px] bg-white border border-[#777] -ml-px" />
        <div className="ml-[11px] mr-[20px] w-[15px] h-[15px] border border-[#777] flex items-center justify-center"><svg width="4" height="7" viewBox="0 0 4 7"><path d="M0 0v7l4-3.5z" fill="#666" /></svg></div>
      </div>
      {/* status bar */}
      <div className="h-[22px] shrink-0 bg-[#f3f3f3] border-t border-[#c6c6c6] flex items-center text-[12px] text-[#444]">
        <span className="ml-[7px]">就绪</span>
        <svg width="14" height="14" viewBox="0 0 14 14" className="ml-[19px]"><rect x="0" y="0" width="7" height="5" fill="#555" /><rect x="1.5" y="3" width="12" height="11" fill="#fff" stroke="#666" /><path d="M4 7h1M7 7h1M10 7h1M4 10h1M7 10h1M10 10h1" stroke="#333" /></svg>
        <div className="flex-1" />
        <div className="w-[40px] h-full bg-[#c6c6c6] flex items-center justify-center">
          <svg width="14" height="14" viewBox="0 0 14 14"><path d="M.5.5h13v13H.5zM.5 5h13M.5 9.500h13M5 .5v13M9.500.5v13" fill="none" stroke="#777" /></svg>
        </div>
        <svg width="14" height="14" viewBox="0 0 14 14" className="ml-[13px]"><path d="M1.5.5h11v13h-11zM4 3.500h6v7H4z" fill="none" stroke="#777" /></svg>
        <svg width="14" height="14" viewBox="0 0 14 14" className="ml-[26px]"><path d="M.5.5h13v13H.5zM.5 9.500h13M7 .5v9" fill="none" stroke="#777" /></svg>
        <span className="ml-[20px] w-[6px] h-px bg-[#555]" />
        <div className="ml-[6px] w-[100px] h-px bg-[#555] relative">
          <span className="absolute left-[44px] -top-[5px] w-[4px] h-[11px] bg-[#555]" />
          <span className="absolute left-[50px] -top-[2px] w-px h-[5px] bg-[#555]" />
        </div>
        <Plus size={9} strokeWidth={1.2} className="ml-[4px] text-[#555]" />
        <span className="ml-[13px] mr-[8px] text-[12px] text-[#555] w-[25px]">90%</span>
      </div>
      {/* taskbar */}
      <div className="h-[40px] shrink-0 flex items-center bg-gradient-to-r from-[#1f3a42] via-[#1f3540] to-[#1c2a42] text-white relative">
        <svg width="16" height="16" viewBox="0 0 16 16" className="ml-[16px] shrink-0"><path d="M0 2.300L6.500 1.400v6.100H0zM7.500 1.300L16 0v7.500H7.500zM0 8.500h6.500v6.100L0 13.700zM7.500 8.500H16V16l-8.500-1.300z" fill="#fff" /></svg>
        <div className="ml-[16px] w-[344px] h-full bg-[#f3f3f3] border border-[#c8c8c8] flex items-center text-[#222] text-[14px]">
          <Search size={16} strokeWidth={1.4} className="ml-[12px] -scale-x-100 text-[#222]" />
          <span className="ml-[11px] whitespace-nowrap">在这里输入你要搜索的内容</span>
        </div>
        <svg width="15" height="16" viewBox="0 0 15 16" className="ml-[16px] shrink-0"><path d="M0 .5h9M0 15.500h9M0 5h5v6H0M13 0v16M15 3h-2M15 13h-2" fill="none" stroke="#fff" /></svg>
        <div className="flex ml-[18px] h-full items-center">
          {/* explorer */}
          <div className="w-[49px] h-full flex items-center justify-center relative">
            <svg width="24" height="24" viewBox="0 0 24 24"><path d="M1 3h8l2 3h10v5H1z" fill="#f2b632" /><path d="M1 8h21v14H1z" fill="#fcd661" /><rect x="7" y="14" width="10" height="8" fill="#3d98dc" /></svg>
            <div className="absolute bottom-0 left-[5px] right-[5px] h-[2px] bg-[#76b9ed]" />
          </div>
          <div className="w-[49px] h-full flex items-center justify-center">
            <svg width="26" height="26" viewBox="0 0 26 26"><defs><linearGradient id="edge" x1="0" y1="0" x2="1" y2="1"><stop offset="0" stopColor="#36c9a8" /><stop offset="1" stopColor="#1b6fc4" /></linearGradient></defs><circle cx="13" cy="13" r="12.5" fill="url(#edge)" /><path d="M8 16c0-6 5-9 10-7 3 1 4 3 4 6h-9c0 3 3 6 9 5-3 4-8 5-11 3-2-2-3-4-3-7z" fill="#1f3a42" opacity=".45" /></svg>
          </div>
          <div className="w-[49px] h-full flex items-center justify-center">
            <svg width="26" height="26" viewBox="0 0 26 26"><path d="M13 4C6 4 2 9 2 14c0 6 6 9 10 9 3 0 3-2 2-4s1-3 3-3h4c2 0 3-1 3-3 0-5-5-9-11-9z" fill="#dfe6ec" /><circle cx="8" cy="10" r="2" fill="#3f86cf" /><circle cx="13" cy="8" r="2" fill="#e8a13a" /><circle cx="7" cy="15" r="2" fill="#6bb04a" /><path d="M17 13L23 1l2 1-5 12z" fill="#d9843a" /></svg>
          </div>
          <div className="w-[49px] h-full flex items-center justify-center">
            <svg width="24" height="26" viewBox="0 0 24 26"><path d="M8 1l14 2-3 22L3 22z" fill="#9fd5e8" /><path d="M8 1l14 2-1 4L7 5z" fill="#e8f3f7" /><path d="M3 22l16 3 3-2-15-3z" fill="#5e8a99" /></svg>
          </div>
          <div className="w-[49px] h-full flex items-center justify-center">
            <svg width="26" height="28" viewBox="0 0 26 28"><circle cx="14" cy="10" r="9" fill="#f4f4f4" stroke="#c93b3b" strokeWidth="2" /><path d="M11 12L9 24M14 12l7 12" stroke="#777" strokeWidth="2" /><circle cx="9" cy="25" r="2" fill="none" stroke="#2f7dbf" strokeWidth="1.5" /><circle cx="21" cy="25" r="2" fill="none" stroke="#2f7dbf" strokeWidth="1.5" /><ellipse cx="8" cy="18" rx="6" ry="4" fill="#888" /></svg>
          </div>
          <div className="w-[49px] h-full flex items-center justify-center relative">
            <div className="w-[24px] h-[28px] rounded-[4px] bg-[#1f8fef] flex items-center justify-center">
              <svg width="14" height="18" viewBox="0 0 14 18"><path d="M3 2v10a4 4 0 0 0 8 0V2" fill="none" stroke="#fff" strokeWidth="2.5" /><path d="M1 2h4M9 2h4" stroke="#fff" strokeWidth="2" /></svg>
            </div>
            <div className="absolute bottom-0 left-[5px] right-[4px] h-[2px] bg-[#76b9ed]" />
          </div>
          <div className="w-[49px] h-full flex items-center justify-center relative">
            <svg width="28" height="26" viewBox="0 0 28 26"><ellipse cx="11" cy="10" rx="10" ry="9" fill="#4dc247" /><path d="M5 17l-1 5 5-3z" fill="#4dc247" /><circle cx="7.5" cy="8" r="1.3" fill="#1f5a2a" /><circle cx="14" cy="8" r="1.3" fill="#1f5a2a" /><ellipse cx="19" cy="16" rx="8" ry="7" fill="#f4f4f4" /><path d="M24 21l1 4-4-2z" fill="#f4f4f4" /></svg>
            <div className="absolute bottom-0 left-[5px] right-[4px] h-[2px] bg-[#76b9ed]" />
          </div>
          <div className="w-[48px] h-full bg-[#3a5157] flex items-center justify-center relative">
            <svg width="26" height="26" viewBox="0 0 26 26"><rect x="7" y="1" width="18" height="24" fill="#21a366" /><rect x="7" y="13" width="18" height="12" fill="#107c41" /><rect x="16" y="1" width="9" height="12" fill="#33c481" /><rect x="1" y="6" width="14" height="14" rx="1" fill="#185c37" /><path d="M4.5 9l7 8M11.500 9l-7 8" stroke="#fff" strokeWidth="1.6" /></svg>
            <div className="absolute bottom-0 inset-x-0 h-[2px] bg-[#76b9ed]" />
          </div>
        </div>
        <div className="flex-1" />
        <div className="flex items-center">
          <ChevronUp size={16} strokeWidth={1.3} />
          <svg width="14" height="14" viewBox="0 0 14 14" className="ml-[9px]"><rect x="2" y="4" width="11" height="8" fill="none" stroke="#fff" /><rect x="2" y="5" width="7" height="6" fill="#fff" /><path d="M2 0l1 4" stroke="#fff" /></svg>
          <Wifi size={16} strokeWidth={1.3} className="ml-[11px] -rotate-45" />
          <Volume2 size={16} strokeWidth={1.3} className="ml-[6px]" />
          <span className="ml-[6px] text-[15px]">中</span>
          <span className="ml-[15px] w-[15px] h-[17px] bg-white text-black text-[13px] leading-[17px] text-center">拼</span>
          <div className="ml-[19px] w-[70px] flex flex-col items-center text-[12px] leading-[17px]">
            <span>14:57 周日</span><span>2022/10/23</span>
          </div>
          <div className="ml-[15px] mr-[22px] w-[18px] h-[24px] relative">
            <svg width="15" height="16" viewBox="0 0 15 16" className="mt-[1px]"><path d="M0 0h15v12H6l-3 3v-3H0z" fill="#fff" /><path d="M3 4h9M3 7h9" stroke="#1c2a42" /></svg>
            <div className="absolute left-[5px] top-[9px] w-[15px] h-[15px] rounded-full bg-[#1c2a42] border border-[#888] text-[10px] font-bold leading-[13px] text-center">2</div>
          </div>
        </div>
      </div>
    </div>
  );
}
